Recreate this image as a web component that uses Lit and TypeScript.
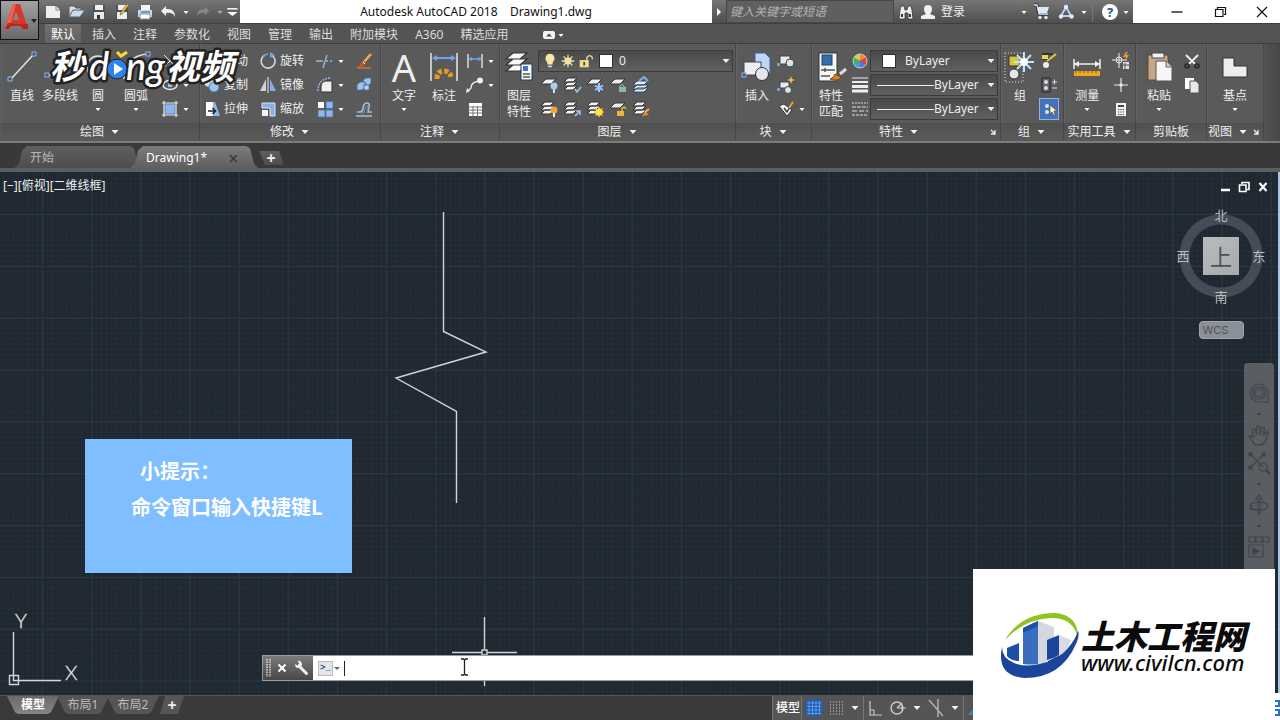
import { LitElement, html, svg, css, nothing, TemplateResult } from "lit";
import { customElement, property } from "lit/decorators.js";
import { classMap } from "lit/directives/class-map.js";

const sheetStack = svg`<path d="M5 3h9l-4 4H1z M5 7h9l-4 4H1z M5 11h9l-4 4H1z" fill="#f2f2f2" stroke="#333" stroke-width="1"/>`;
const oneSheet = svg`<path d="M6 4h10l-5 5H1z" fill="#f2f2f2" stroke="#333" stroke-width="1"/>`;

/* Small glyphs, drawn on a 20 x 20 grid */
const SMALL: Record<string, unknown> = {
  ellipse: svg`<ellipse cx="10" cy="10" rx="7" ry="4.5" fill="none" stroke="#e6e6e6" stroke-width="1.5"/><rect x="8" y="8" width="4" height="4" fill="#9cc3ee"/>`,
  rect: svg`<path d="M4 4l12 12M4 16L16 4" stroke="#e6e6e6"/>`,
  hatch: svg`<rect x="5" y="5" width="10" height="10" fill="#8fb6ea" stroke="#5a87c4"/><path d="M2 4h16M2 16h16M4 2v16M16 2v16" stroke="#e8e8e8" stroke-width="1.2"/>`,
  move: svg`<path d="M10 2v16M2 10h16" stroke="#e6e6e6" stroke-width="1.5"/>`,
  copy: svg`<circle cx="7" cy="7" r="5" fill="#ddd"/><circle cx="12" cy="12" r="5" fill="#9cc3ee" stroke="#4d78b3"/>`,
  stretch: svg`<path d="M4 3h7v14H4z" fill="#fff"/><path d="M11 3h2l5 14h-7z" fill="#8fb6ea"/><path d="M6 12h7M10.500 9l3 3-3 3" fill="none" stroke="#222" stroke-width="1.600"/>`,
  rotate: svg`<path d="M6 4.500A7 7 0 1 0 13.500 4" fill="none" stroke="#d5d9df" stroke-width="1.600"/><path d="M12 1l5 3-5 3z" fill="#7aa7e0"/><path d="M5 6a7 7 0 0 1 5-3" fill="none" stroke="#7aa7e0" stroke-width="1.500"/>`,
  mirror: svg`<path d="M8 4v12H2z" fill="#cfd3d8"/><path d="M12 4v12h6z" fill="#86b0e6"/><path d="M10 2v16" stroke="#f0f0f0"/>`,
  scale: svg`<path d="M4 4h13v13h-5V9H4z" fill="#86b0e6" stroke="#d9e6f7"/><rect x="4" y="11" width="6" height="6" fill="#f4f4f4"/>`,
  trim: svg`<path d="M1 10h7M11 10h2M15 10h2M12 4L8 17" stroke="#9db8d8" stroke-width="1.400" fill="none"/>`,
  fillet: svg`<path d="M6 17V11q1-5 5-5h6v11z" fill="#f0f0f0" stroke="#333"/><path d="M3 16Q3 4 15 3" fill="none" stroke="#8fb6ea" stroke-width="1.500" stroke-dasharray="2 1"/>`,
  array: svg`<rect x="3" y="3" width="6" height="6" fill="#fff"/><path d="M11 2.500h7v7h-7zM3 11h7v7H3zM11 11h7v7h-7z" fill="#8fb6ea" stroke="#4c6f9e" stroke-width=".8"/>`,
  erase: svg`<path d="M3 17h14" stroke="#e28a62"/><path d="M17 3l-8 9" stroke="#e7b34a" stroke-width="2.600"/><path d="M10 10l2 2-4 5-6-1q5-1 5-5z" fill="#c4581d"/><path d="M9 11l2 2" stroke="#fff"/>`,
  explode: svg`<path d="M3 10l3-3h5v5l-3 3H3zM9 5l3-2h5v5l-3 3" fill="#9cc3ee" stroke="#52749f"/><rect x="10" y="10" width="5" height="5" fill="#b9d3f3" stroke="#52749f"/>`,
  offset: svg`<path d="M2 17h16M3 13h3q2 0 3-3 0-6 4-6 3 0 2 4l-1 5h4" fill="none" stroke="#a8bfdc" stroke-width="1.600"/><path d="M7 14h3q1-7 3-7t0 7" fill="none" stroke="#6c93c5"/>`,
  linear: svg`<path d="M3 3v14M17 3v14" stroke="#eee" stroke-width="1.300"/><path d="M4 8h12" stroke="#6ea5ea" stroke-width="1.500"/><path d="M3 8l4-2v4zM17 8l-4-2v4z" fill="#6ea5ea"/>`,
  leader: svg`<path d="M3 16l3-3q0-6 8-7" fill="none" stroke="#eee" stroke-width="1.300"/><circle cx="15" cy="5.500" r="3" fill="#eee"/><path d="M1 18l1-5 3 3z" fill="#eee"/>`,
  table: svg`<rect x="4" y="4" width="13" height="13" fill="#fff"/><path d="M4 8h13M4 11h13M4 14h13M8 7v10M12.500 7v10" stroke="#777"/>`,
  layOff: svg`${oneSheet}<circle cx="14" cy="11" r="3.500" fill="#a9cdf5"/><path d="M14 14v4" stroke="#ddd" stroke-width="2"/>`,
  layIso: svg`${sheetStack}<path d="M12 14l2 3 4-5" fill="none" stroke="#9cc3ee" stroke-width="1.500"/>`,
  layFrz: svg`${oneSheet}<path d="M13 8v9M9 10.500l8 4.500M17 10.500L9 15" stroke="#9cc9ff" stroke-width="2"/>`,
  layLock: svg`${oneSheet}<path d="M11 12v-1q2-3 4 0v1" fill="none" stroke="#9fc7b9"/><rect x="10" y="12" width="7" height="5" fill="#8cb8a5"/>`,
  layCur: svg`<path d="M5 6h11l-4 4H1zM5 10h11l-4 4H1zM5 13h11l-4 4H1z" fill="#e9eef5" stroke="#30496b"/><path d="M7 6l5-4 4 4" fill="none" stroke="#86b0e6" stroke-width="2"/>`,
  layOn: svg`${sheetStack}<circle cx="14" cy="11" r="3.500" fill="#f0a43a"/><path d="M14 14v4" stroke="#eee" stroke-width="2"/>`,
  layUniso: svg`${sheetStack}<path d="M12 17l5-5M13 12h4v4" fill="none" stroke="#9cc3ee" stroke-width="1.500"/>`,
  layThaw: svg`${sheetStack}<path d="M13 8v10M8 13h10M9.500 9.500l7 7M16.500 9.500l-7 7" stroke="#f3b928" stroke-width="1.600"/><circle cx="13" cy="13" r="3.500" fill="#ffe14f"/>`,
  layUnlock: svg`${oneSheet}<path d="M13 12V9q3-2 4 1" fill="none" stroke="#eab53a" stroke-width="1.500"/><rect x="8" y="12" width="7" height="5" fill="#eab53a"/>`,
  layMatch: svg`${sheetStack}<path d="M10 17l3-5 4 4z" fill="#e08a35"/><path d="M13 13l4-3" stroke="#f0b26a" stroke-width="2"/>`,
  blkNew: svg`<rect x="4" y="5" width="10" height="8" fill="#e6eaf2" stroke="#444"/><circle cx="14" cy="12" r="4" fill="#dde2ea" stroke="#444"/><rect x="1" y="12" width="3" height="3" fill="#6fa1e2"/>`,
  blkEdit: svg`<rect x="4" y="7" width="9" height="6" fill="#e6eaf2" stroke="#444"/><circle cx="12" cy="15" r="3.500" fill="#dde2ea" stroke="#444"/><path d="M15 1l1 3 3 1-3 1-1 3-1-3-3-1 3-1z" fill="#f5c342"/><rect x="1" y="13" width="3" height="3" fill="#6fa1e2"/>`,
  blkAttr: svg`<path d="M3 7l5-2 8 6-5 6z" fill="#f3f3f3" stroke="#333"/><path d="M8 9l3 4 5-8" fill="none" stroke="#333" stroke-width="1.400"/><path d="M13 9l4-6" stroke="#e6a040" stroke-width="2"/>`,
  wheel: svg`<path d="M10 10V3a7 7 0 0 1 6 3.500z" fill="#f08a3c"/><path d="M10 10l6-3.500a7 7 0 0 1 0 7z" fill="#e8413c"/><path d="M10 10l6 3.500a7 7 0 0 1-6 3.500z" fill="#5d6fe0"/><path d="M10 10v7a7 7 0 0 1-6-3.500z" fill="#36a2e0"/><path d="M10 10l-6 3.500a7 7 0 0 1 0-7z" fill="#3fb667"/><path d="M10 10L4 6.500A7 7 0 0 1 10 3z" fill="#e5c94a"/><circle cx="10" cy="10" r="7" fill="none" stroke="#ddd" stroke-width=".8"/>`,
  weights: svg`<path d="M2 3h16" stroke="#eee"/><path d="M2 7h16" stroke="#eee" stroke-width="2"/><path d="M2 11.500h16" stroke="#eee" stroke-width="3"/><path d="M2 16h16" stroke="#eee" stroke-width="3"/>`,
  dashes: svg`<path d="M2 4h16" stroke="#ddd" stroke-dasharray="2 1"/><path d="M2 8h16" stroke="#ddd" stroke-dasharray="4 1"/><path d="M2 12h16" stroke="#ddd" stroke-dasharray="5 2"/><path d="M2 16h16" stroke="#ddd" stroke-dasharray="3 1"/>`,
  ungroup: svg`<path d="M3 3h11M3 8h7" stroke="#333" stroke-width="2"/><rect x="3" y="4" width="6" height="4" fill="#e7d75a"/><path d="M17 3L8 10" stroke="#e8c33f" stroke-width="2"/><circle cx="7" cy="14" r="3" fill="#eee"/>`,
  groupEdit: svg`<path d="M3 3h8v14H3z" fill="#666" stroke="#222"/><circle cx="7" cy="7" r="2" fill="#cfe0f5"/><circle cx="7" cy="13" r="2" fill="#cfe0f5"/><path d="M13 7h5M15.500 4.500v5M13 13h5" stroke="#ddd"/>`,
  groupSel: svg`<circle cx="8" cy="7" r="2" fill="#d7e6fa"/><circle cx="8" cy="13" r="2" fill="#d7e6fa"/><path d="M11 6v9l2-2 2 4 1-1-1-4h3z" fill="#fff3b0" stroke="#444" stroke-width=".6"/>`,
  quick: svg`<path d="M8 2v15M1 9h15" stroke="#eee"/><circle cx="8" cy="9" r="3" fill="none" stroke="#eee"/><path d="M15 1l-3 5h3l-1 4 4-6h-3l2-3z" fill="#f09a2e"/><rect x="12" y="11" width="6" height="7" fill="#ddd"/><path d="M12 14h6M14 12v6" stroke="#555"/>`,
  point: svg`<path d="M10 3v14M3 10h14" stroke="#e6e6e6" stroke-width="1.200"/><circle cx="10" cy="10" r="1.800" fill="#e6e6e6"/>`,
  calc: svg`<rect x="5" y="4" width="10" height="13" fill="#f4f4f4"/><path d="M7 7h6" stroke="#444" stroke-width="2"/><path d="M7 10.500h6M7 13h6M7 15.500h6" stroke="#555" stroke-dasharray="1.500 .8"/>`,
  cut: svg`<path d="M4 4l9 9M16 4l-9 9" stroke="#f0f0f0" stroke-width="1.800"/><circle cx="5" cy="15" r="2" fill="none" stroke="#222" stroke-width="1.500"/><circle cx="15" cy="15" r="2" fill="none" stroke="#222" stroke-width="1.500"/>`,
  copyDoc: svg`<path d="M3 3h9v11H3z" fill="#fff"/><path d="M8 6h6l3 3v9H8z" fill="#e9e9e9" stroke="#555"/>`,
  bulb: svg`<path d="M10 2a5 5 0 0 1 3 9v3H7v-3a5 5 0 0 1 3-9z" fill="#f7e7a0"/><path d="M8 15h4v2H8z" fill="#ddd"/>`,
  sun: svg`<path d="M10 3v14M3 10h14M5 5l10 10M15 5L5 15" stroke="#e6d9a5" stroke-width="1.400"/><circle cx="10" cy="10" r="4" fill="#f4e2a0"/>`,
  unlock: svg`<path d="M11 9V6q3-4 6 0v2" fill="none" stroke="#e9dca0" stroke-width="1.500"/><rect x="3" y="9" width="10" height="8" fill="#f1e089"/><path d="M8 11v4" stroke="#444" stroke-width="2"/>`,
  new: svg`<path d="M3 4h10l4 4v8H3z" fill="#eee"/><path d="M13 4v4h4" fill="none" stroke="#888"/>`,
  open: svg`<path d="M3 15V4h5l2 2h5v3" fill="#ddd" stroke="#555"/><path d="M3 15l4-7h12l-5 7z" fill="#c9dae8" stroke="#49637d"/>`,
  save: svg`<path d="M4 3h12v14H4z" fill="#4c5057"/><path d="M6 3h8v5H6z" fill="#f2f2f2"/><path d="M5 10h10v7H5z" fill="#e9e9e9"/><path d="M8 13h3v4H8z" fill="#333"/>`,
  saveAs: svg`<path d="M4 3h12v14H4z" fill="#4c5057"/><path d="M6 3h8v5H6zM5 10h10v7H5z" fill="#eee"/><path d="M17 3l-7 9-2 1 1-3 6-8z" fill="#f0bd45" stroke="#73531a" stroke-width=".6"/>`,
  print: svg`<path d="M6 3h9v6H6z" fill="#f4f4f4"/><path d="M3 8h14v7H3z" fill="#ccd8e5"/><path d="M5 12h10v5H5z" fill="#fff" stroke="#7b91a8"/><path d="M6 10h9" stroke="#5586b9" stroke-width="1.500"/>`,
  undo: svg`<path d="M3 9l5-5v3q9-1 9 8-2-5-9-4v3z" fill="#f0f0f0"/>`,
  redo: svg`<path d="M17 9l-5-5v3Q3 6 3 15q2-5 9-4v3z" fill="#858585"/>`,
  more: svg`<path d="M4 6h13" stroke="#fff" stroke-width="1.800"/><path d="M4 10h13l-6.500 5z" fill="#fff"/>`,
  binoc: svg`<path d="M3 17l1-9 1-4h3l1 4 2 0 1-4h3l1 4 1 9h-5v-6h-3v6z" fill="#eee" stroke="#333" stroke-width=".8"/><path d="M5 12h2v3H5zM13 12h2v3h-2z" fill="#333"/>`,
  user: svg`<path d="M10 3q4 0 4 4 0 3-2 5l5 2v3H3v-3l5-2q-2-2-2-5 0-4 4-4z" fill="#f0f0f0"/>`,
  cart: svg`<path d="M2 3h3l2 9h9" fill="none" stroke="#222" stroke-width="3"/><path d="M5 5h12l-2 6H7z" fill="#dce9f7"/><path d="M2 3h3l2 9h9" fill="none" stroke="#dce9f7" stroke-width="1.300"/><circle cx="8" cy="15.500" r="1.700" fill="#dce9f7"/><circle cx="14" cy="15.500" r="1.700" fill="#dce9f7"/>`,
  a360: svg`<path d="M10 5L5 14h10z" fill="none" stroke="#b9d2f0" stroke-width="2"/><circle cx="10" cy="5" r="2.200" fill="#dfe9f5"/><circle cx="5" cy="14.500" r="2.200" fill="#dfe9f5"/><circle cx="15.500" cy="14.500" r="2.200" fill="#dfe9f5"/>`,
  min: svg`<path d="M5 10h10" stroke="#111" stroke-width="1.200"/>`,
  restore: svg`<path d="M7.500 7V5.500h8v7H14M5.500 7.500h7.500v7H5.500z" fill="none" stroke="#111" stroke-width="1.200"/>`,
  close: svg`<path d="M5 5l10 10M15 5L5 15" stroke="#111" stroke-width="1.200"/>`,
  wheelNav: svg`<path d="M10 1a9 9 0 0 1 9 9v9h-9a9 9 0 0 1 0-18z"/><path d="M7 4h6l3 3v6l-3 3H7l-3-3V7z"/><circle cx="10" cy="10" r="4"/>`,
  pan: svg`<path d="M6 19q-3-5-5-8 2-1 4 1L4 5q2-2 3 1l1 4V2q2-1 3 1v7l2-7q2-1 2 1l-1 7 3-4q2 0 1 2-1 6-5 10z"/>`,
  zoom: svg`<path d="M1 1l13 13M15 1L1 15"/><path d="M0 0h3v3H0zM13 0h3v3h-3zM0 13h3v3H0z" fill="#3f454b"/><circle cx="14" cy="14" r="4"/><path d="M17 17l4 4" stroke-width="2.500"/>`,
  orbit: svg`<path d="M10 0l3 4h-2v15H9V4H7z"/><ellipse cx="10" cy="11" rx="9" ry="4"/><path d="M3 10l-2 4 5 1"/>`,
  motion: svg`<path d="M0 0h6v5H0zM7 0h6v5H7zM14 0h6v5h-6zM0 8h14v12H0z"/><path d="M4 11l6 3-6 4z" fill="#3b4147"/>`,
  gridOn: svg`<rect x="1" y="1" width="18" height="18" rx="5" fill="#145fc0" opacity=".6"/><path d="M5 3v14M8.500 3v14M12 3v14M15.500 3v14M3 5h14M3 8.500h14M3 12h14M3 15.500h14" stroke="#4a9cff"/>`,
  snap: svg`<path d="M4 4h13M4 7h13M4 10h13M4 13h13M4 16h13" stroke="#d2d2d2" stroke-dasharray="1 2"/>`,
  ortho: svg`<path d="M4 3v14h12M4 12h4v5" fill="none" stroke="#c9c9c9" stroke-width="1.200"/>`,
  polar: svg`<circle cx="9" cy="10" r="6" fill="none" stroke="#ccc" stroke-width="1.400"/><path d="M9 10h9M9 10l5-5M14 7v5" stroke="#ccc" stroke-width="1.200" fill="none"/>`,
  iso: svg`<path d="M3 2l14 16M12 1v18" stroke="#b5b5b5" stroke-width="1.400"/>`,
  angle: svg`<path d="M16 3L4 16h13M10 10q4 1 4 6" fill="none" stroke="#2d8cf0" stroke-width="1.600"/>`,
};

/* Large ribbon glyphs, drawn on a 32 x 32 grid */
const LARGE: Record<string, unknown> = {
  line: svg`<path d="M5 28L28 3" stroke="#e4e4e4" stroke-width="1.500"/><path d="M2 26h4v4H2zM26 1h4v4h-4z" fill="#40567a" stroke="#8fb6ea"/>`,
  pline: svg`<path d="M3 24h14L29 8" fill="none" stroke="#e4e4e4" stroke-width="1.500"/><rect x="1" y="22" width="4" height="4" fill="#40567a" stroke="#8fb6ea"/>`,
  circle: svg`<circle cx="16" cy="16" r="11" fill="none" stroke="#e4e4e4" stroke-width="1.500"/>`,
  arc: svg`<path d="M4 28Q6 4 28 3" fill="none" stroke="#e4e4e4" stroke-width="1.500"/><rect x="26" y="1" width="4" height="4" fill="#40567a" stroke="#8fb6ea"/>`,
  dim: svg`<path d="M3 2v28M29 2v28" stroke="#e8e8e8" stroke-width="1.500"/><path d="M5 7h22" stroke="#6ea5ea" stroke-width="2"/><path d="M4 7l5-3v6zM28 7l-5-3v6z" fill="#6ea5ea"/><path d="M9 28q0-8 7-8 7 0 7 8" fill="none" stroke="#e89a25" stroke-width="5" stroke-dasharray="4 2"/>`,
  layers: svg`<path d="M10 2h14l-7 6H3zM10 8h14l-7 6H3zM10 14h14l-7 6H3z" fill="#fafafa" stroke="#333" stroke-width="1.200"/><rect x="18" y="13" width="11" height="16" fill="#f6f9fd" stroke="#243a5e"/><rect x="20" y="15" width="5" height="5" fill="#3c78c2"/><path d="M20 23h7M20 26h7" stroke="#555" stroke-width="1.500"/>`,
  insert: svg`<path d="M14 2h10l5 5v15H14z" fill="#bcd7f7" stroke="#3d6394"/><rect x="3" y="11" width="17" height="13" fill="#eceff4" stroke="#444"/><circle cx="21" cy="23" r="6.500" fill="#e4e8ed" stroke="#333"/><rect x="1" y="22" width="4" height="4" fill="#40567a" stroke="#8fb6ea"/>`,
  match: svg`<path d="M4 2h18v28H4z" fill="#f4f6f9" stroke="#333"/><rect x="7" y="4" width="10" height="10" fill="#2f6fae" stroke="#1d436b"/><path d="M6 19h14M6 25h9M10 17v4" stroke="#555" stroke-width="1.500"/><path d="M31 18l-6 5" stroke="#ddd" stroke-width="3"/><path d="M15 28q4-1 5-5l6 3q-2 5-11 2z" fill="#d58328" stroke="#7c4510"/>`,
  group: svg`<path d="M1 2h18v29H1z" fill="none" stroke="#ddd" stroke-dasharray="1 2"/><rect x="5" y="5" width="11" height="10" fill="#d9c63a" stroke="#333"/><circle cx="10" cy="23" r="5" fill="#e3e6ea" stroke="#333"/><path d="M20 1v20M10 11h20M13 4l14 14M27 4L13 18" stroke="#bfe2ff" stroke-width="2"/><circle cx="20" cy="11" r="4" fill="#fff"/>`,
  measure: svg`<path d="M3 8v10M29 8v10M3 13h26" stroke="#f0f0f0" stroke-width="1.500"/><path d="M3 13l5-3v6zM29 13l-5-3v6z" fill="#f0f0f0"/><rect x="3" y="20" width="26" height="5" fill="#f0a61e"/><path d="M5 20v2M9 20v2M13 20v2M17 20v2M21 20v2M25 20v2" stroke="#8a5a08"/>`,
  paste: svg`<rect x="5" y="4" width="20" height="25" fill="#c6a888" stroke="#5b4632"/><path d="M9 2h12v5H9z" fill="#f2f2f2" stroke="#444"/><path d="M13 10h10l6 6v14H13z" fill="#f6f6f6" stroke="#555"/><path d="M23 10v6h6" fill="#d0d0d0" stroke="#666"/>`,
  base: svg`<path d="M4 7h11v8h13v11H4z" fill="#ededed" stroke="#333"/>`,
};

const icon = (name: string, size = 20) =>
  html`<svg class="ico" width=${size} height=${size} viewBox="0 0 20 20" aria-hidden="true">${SMALL[name]}</svg>`;
const caret = (dim = false) =>
  html`<svg class="caret" width="8" height="10" viewBox="0 0 8 10" aria-hidden="true"><path d="M1.500 4h5L4 7z" fill=${dim ? "#aaa" : "#fff"}/></svg>`;
const drop = html`<svg width="10" height="8" viewBox="0 0 10 8" aria-hidden="true"><path d="M1.500 2h7L5 6z" fill="#f2f2f2"/></svg>`;

const base = css`
  * { box-sizing: border-box; }
  button, input, select { font: inherit; color: inherit; border: 0; margin: 0; padding: 0; background: none; }
  button { display: flex; align-items: center; justify-content: center; white-space: nowrap; }
  svg { display: block; flex: none; }
`;

interface Big { icon: string; lines: string[]; menu?: boolean; glyph?: string; }
interface Small { icon: string; name: string; label?: string; menu?: boolean; on?: boolean; }

const bigTool = (b: Big) => html`
  <button class="big">
    ${b.glyph
      ? html`<span class="glyph" aria-hidden="true">${b.glyph}</span>`
      : html`<svg class="pic" width="32" height="32" viewBox="0 0 32 32" aria-hidden="true">${LARGE[b.icon]}</svg>`}
    ${b.lines.map((l) => html`<span>${l}</span>`)}
    ${b.menu ? caret() : nothing}
  </button>`;

const smallTool = (s: Small) => html`
  <button class=${classMap({ small: true, on: !!s.on })} aria-label=${s.name}>
    ${icon(s.icon)}${s.label ? html`<span>${s.label}</span>` : nothing}${s.menu ? caret() : nothing}
  </button>`;

@customElement("ribbon-panel")
class RibbonPanel extends LitElement {
  @property() heading = "";
  @property() fit = "";
  @property({ type: Boolean }) menu = false;
  @property({ type: Boolean }) launcher = false;
  static styles = [base, css`
    :host { display: flex; flex-direction: column; min-width: 0; border-right: 1px solid #474747; box-shadow: inset 1px 0 #636363; }
    .body { display: flex; height: 79px; padding: 5px 2px 0; }
    .snug { padding: 5px 2px 0 0; }
    .roomy { padding-left: 4px; gap: 2px; }
    .spread { justify-content: space-around; }
    footer { display: flex; align-items: center; height: 18px; background: linear-gradient(#505050, #5a5a5a); }
    .title { flex: 1; gap: 6px; line-height: 18px; }
    .launch { width: 14px; height: 16px; }
  `];
  render() {
    return html`
      <div class="body ${this.fit}"><slot></slot></div>
      <footer>
        <button class="title">${this.heading}${this.menu ? drop : nothing}</button>
        ${this.launcher
          ? html`<button class="launch" aria-label="更多"><svg width="8" height="8" viewBox="0 0 8 8"><path d="M2 2l4 4M6 2v4H2" fill="none" stroke="#eee" stroke-width="1.300"/></svg></button>`
          : nothing}
      </footer>`;
  }
}

@customElement("cad-ribbon")
class CadRibbon extends LitElement {
  static styles = [base, css`
    :host {
      display: grid; padding: 0 16px 0 1px;
      grid-template-columns: 199fr 181fr 119fr 236fr 76fr 189fr 63fr 72fr 71fr 57fr;
      background: linear-gradient(90deg, #5a5a5a 98%, #474747);
      border-top: 1px solid #3c3c3c; border-bottom: 2px solid #7b7b7b;
    }
    ribbon-panel { background: #5a5a5a; }
    .big { flex-direction: column; justify-content: flex-start; width: 38px; flex: none; line-height: 16px; }
    .pic, .glyph { height: 32px; margin: 2px 0 5px; }
    .glyph { font: 38px/32px "Noto Sans", sans-serif; color: #eee; }
    .tools { display: grid; grid-template-rows: repeat(3, 24px); grid-auto-flow: column; align-content: start; align-items: center; justify-content: start; }
    .row { display: flex; gap: 3px; padding-left: 2px; }
    .small { justify-content: flex-start; gap: 2px; height: 22px; min-width: 20px; }
    .on { background: #4471b8; box-shadow: inset 0 0 0 1px #8db3e8; }
    .edit { grid-template-columns: 56px 57px 39px 20px; }
    .draw { padding-left: 5px; }
    .fields { display: grid; grid-template-rows: repeat(3, 24px); align-items: center; flex: 1; min-width: 0; align-content: start; }
    .combo { display: flex; align-items: center; height: 22px; padding: 0 1px 0 2px; background: linear-gradient(#494949, #606060); border: 1px solid #3b3b3b; min-width: 0; }
    .combo select { appearance: none; flex: 1; min-width: 0; height: 20px; }
    .swatch { width: 14px; height: 14px; margin: 0 6px 0 4px; background: #fff; border: 1px solid #2e2e2e; flex: none; }
    .combo.color .swatch { margin: 0 9px; }
    .rule { flex: 1; height: 1px; margin-left: 4px; background: #eee; }
    .combo.lined select { flex: none; width: 45px; }
    .combo.lined svg { margin-left: 7px; }
  `];
  render(): TemplateResult {
    return html`
      <ribbon-panel heading="绘图" menu>
        ${[
          { icon: "line", lines: ["直线"] }, { icon: "pline", lines: ["多段线"] },
          { icon: "circle", lines: ["圆"], menu: true }, { icon: "arc", lines: ["圆弧"], menu: true },
        ].map(bigTool)}
        <div class="tools draw">
          ${[{ icon: "rect", name: "矩形", menu: true }, { icon: "ellipse", name: "椭圆", menu: true }, { icon: "hatch", name: "图案填充", menu: true }].map(smallTool)}
        </div>
      </ribbon-panel>
      <ribbon-panel heading="修改" menu>
        <div class="tools edit">
          ${[
            { icon: "move", name: "移动", label: "移动" }, { icon: "copy", name: "复制", label: "复制" }, { icon: "stretch", name: "拉伸", label: "拉伸" },
            { icon: "rotate", name: "旋转", label: "旋转" }, { icon: "mirror", name: "镜像", label: "镜像" }, { icon: "scale", name: "缩放", label: "缩放" },
            { icon: "trim", name: "修剪", menu: true }, { icon: "fillet", name: "圆角", menu: true }, { icon: "array", name: "阵列", menu: true },
            { icon: "erase", name: "删除" }, { icon: "explode", name: "分解" }, { icon: "offset", name: "偏移" },
          ].map(smallTool)}
        </div>
      </ribbon-panel>
      <ribbon-panel heading="注释" fit="roomy" menu>
        ${[{ icon: "", glyph: "A", lines: ["文字"], menu: true }, { icon: "dim", lines: ["标注"] }].map(bigTool)}
        <div class="tools">
          ${[{ icon: "linear", name: "线性", menu: true }, { icon: "leader", name: "引线", menu: true }, { icon: "table", name: "表格" }].map(smallTool)}
        </div>
      </ribbon-panel>
      <ribbon-panel heading="图层" fit="snug" menu>
        ${bigTool({ icon: "layers", lines: ["图层", "特性"] })}
        <div class="fields">
          <div class="combo">
            ${icon("bulb", 18)}${icon("sun", 18)}${icon("unlock", 18)}<i class="swatch"></i>
            <select aria-label="图层"><option>0</option></select>${drop}
          </div>
          <div class="row">${["layOff", "layIso", "layFrz", "layLock", "layCur"].map((i) => smallTool({ icon: i, name: "图层工具" }))}</div>
          <div class="row">${["layOn", "layUniso", "layThaw", "layUnlock", "layMatch"].map((i) => smallTool({ icon: i, name: "图层工具" }))}</div>
        </div>
      </ribbon-panel>
      <ribbon-panel heading="块" menu>
        ${bigTool({ icon: "insert", lines: ["插入"] })}
        <div class="tools">
          ${[{ icon: "blkNew", name: "创建" }, { icon: "blkEdit", name: "编辑" }, { icon: "blkAttr", name: "编辑属性", menu: true }].map(smallTool)}
        </div>
      </ribbon-panel>
      <ribbon-panel heading="特性" fit="snug" menu launcher>
        ${bigTool({ icon: "match", lines: ["特性", "匹配"] })}
        <div class="tools">
          ${[{ icon: "wheel", name: "颜色" }, { icon: "weights", name: "线宽" }, { icon: "dashes", name: "线型" }].map(smallTool)}
        </div>
        <div class="fields">
          <div class="combo color"><i class="swatch"></i><select aria-label="对象颜色"><option>ByLayer</option></select>${drop}</div>
          <div class="combo lined"><i class="rule"></i><select aria-label="线宽"><option>ByLayer</option></select>${drop}</div>
          <div class="combo lined"><i class="rule"></i><select aria-label="线型"><option>ByLayer</option></select>${drop}</div>
        </div>
      </ribbon-panel>
      <ribbon-panel heading="组" fit="snug" menu>
        ${bigTool({ icon: "group", lines: ["组"] })}
        <div class="tools">
          ${[{ icon: "ungroup", name: "解除编组" }, { icon: "groupEdit", name: "组编辑" }, { icon: "groupSel", name: "组选择", on: true }].map(smallTool)}
        </div>
      </ribbon-panel>
      <ribbon-panel heading="实用工具" fit="spread" menu>
        ${bigTool({ icon: "measure", lines: ["测量"], menu: true })}
        <div class="tools">
          ${[{ icon: "quick", name: "快速选择" }, { icon: "point", name: "点坐标" }, { icon: "calc", name: "快速计算器" }].map(smallTool)}
        </div>
      </ribbon-panel>
      <ribbon-panel heading="剪贴板" fit="spread">
        ${bigTool({ icon: "paste", lines: ["粘贴"], menu: true })}
        <div class="tools">${[{ icon: "cut", name: "剪切" }, { icon: "copyDoc", name: "复制" }].map(smallTool)}</div>
      </ribbon-panel>
      <ribbon-panel heading="视图" fit="spread" menu launcher>
        ${bigTool({ icon: "base", lines: ["基点"], menu: true })}
      </ribbon-panel>`;
  }
}

@customElement("title-bar")
class TitleBar extends LitElement {
  static styles = [base, css`
    :host { display: grid; grid-template: 24px 19px / 39px minmax(0, 1fr); background: #545454; color: #eee; }
    .app { grid-row: 1 / 3; height: 40px; background: linear-gradient(#a2a2a2, #686868); border: 1px solid #111; align-items: flex-start; padding-top: 1px; }
    .top { display: flex; background: #fff; border-bottom: 1px solid #3f3f3f; }
    .bar { display: flex; align-items: center; background: linear-gradient(#767676, #4e4e4e); }
    .quick { width: 201px; padding-left: 4px; gap: 3px; }
    .quick .caret { margin: 0 1px; }
    .quick .more { margin-left: -4px; }
    h1 { flex: 1; margin: 0; font: 12px/24px "Noto Sans", sans-serif; color: #111; text-align: center; white-space: pre; overflow: hidden; }
    .info { width: 421px; }
    .go { width: 14px; height: 23px; }
    input { width: 168px; height: 23px; padding: 0 3px; background: #5f5f5f; border: 1px solid #474747; font-style: italic; }
    input::placeholder { color: #b5b5b5; }
    .find { margin: 0 2px; }
    .sign { gap: 3px; }
    .end { display: flex; align-items: center; margin-left: auto; gap: 4px; padding-right: 3px; }
    .end i { width: 1px; height: 18px; margin-right: 5px; background: #777; }
    .help { width: 16px; height: 16px; border-radius: 50%; background: #fff; color: #1c4e96; font: bold 13px/16px "Open Sans", sans-serif; }
    .win { display: flex; width: 147px; justify-content: space-between; padding: 0 8px 0 33px; }
    nav { display: flex; gap: 5px; padding-left: 6px; height: 19px; color: #dcdcdc; }
    nav button { padding: 2px 6px 0; height: 19px; }
    nav .on { background: linear-gradient(#707070, #626262); color: #fff; }
    nav .toggle { margin-left: 18px; gap: 2px; }
  `];
  render() {
    const tabs = ["默认", "插入", "注释", "参数化", "视图", "管理", "输出", "附加模块", "A360", "精选应用"];
    return html`
      <button class="app" aria-label="应用程序菜单">
        <svg width="36" height="32" viewBox="0 0 36 32">
          <path d="M3 27L11 2h7l8 25h-6l-2-6H9l-1 6z" fill="#d8362a"/><path d="M11 2h3l-5 19-1 6H3z" fill="#f0604f"/>
          <path d="M3 27l3-6 20 1v5h-5l-2-3H9l-2 3z" fill="#b8261e"/><path d="M14 9l3 9h-6z" fill="#858585"/><path d="M29 17h6l-3 4z" fill="#222"/>
        </svg>
      </button>
      <div class="top">
        <div class="bar quick">
          ${["new", "open", "save", "saveAs", "print", "undo"].map((i) => html`<button aria-label=${i}>${icon(i)}</button>`)}
          <button aria-label="undo list">${caret()}</button><button aria-label="redo">${icon("redo", 18)}</button>
          <button aria-label="redo list">${caret(true)}</button><button class="more" aria-label="customize">${icon("more", 16)}</button>
        </div>
        <h1>Autodesk AutoCAD 2018    Drawing1.dwg</h1>
        <div class="bar info">
          <button class="go" aria-label="展开"><svg width="6" height="8" viewBox="0 0 6 8"><path d="M1 0l4 4-4 4z" fill="#fff"/></svg></button>
          <input type="search" aria-label="搜索" placeholder="键入关键字或短语">
          <button class="find" aria-label="查找">${icon("binoc")}</button>
          <button class="sign">${icon("user")}登录</button>
          <div class="end">
            ${caret()}<button aria-label="商店">${icon("cart")}</button><button aria-label="A360">${icon("a360")}</button>${caret()}<i></i>
            <button class="help" aria-label="帮助">?</button>${caret()}
          </div>
        </div>
        <div class="win">
          <button aria-label="最小化">${icon("min", 22)}</button><button aria-label="还原">${icon("restore", 20)}</button><button aria-label="关闭">${icon("close", 20)}</button>
        </div>
      </div>
      <nav>
        ${tabs.map((t, i) => html`<button class=${classMap({ on: i === 0 })}>${t}</button>`)}
        <button class="toggle" aria-label="最小化功能区">
          <svg width="12" height="8" viewBox="0 0 12 8"><rect width="12" height="8" rx="2" fill="#f2f2f2"/><path d="M3 5.500L6 2.500l3 3z" fill="#444"/></svg>${caret()}
        </button>
      </nav>`;
  }
}

@customElement("drawing-area")
class DrawingArea extends LitElement {
  static styles = [base, css`
    :host { display: block; position: relative; overflow: hidden; background: #1f2830; border-right: 2px solid #a9c4e4; color: #eee; }
    .sheet { position: absolute; inset: 0; width: 100%; height: 100%; }
    .ucs { font: 300 20px Lato, sans-serif; fill: #e4e7ea; stroke: #e4e7ea; stroke-width: .3px; }
    .view { position: absolute; left: 3px; top: 6px; line-height: 16px; display: flex; }
    .mdi { position: absolute; right: 8px; top: 8px; display: flex; gap: 5px; }
    .cube { position: absolute; right: 12px; top: 35px; display: grid; justify-items: center; gap: 16px; width: 93px; }
    .compass { display: grid; grid-template: 16px 66px 16px / 20px 56px 20px; place-items: center; font-size: 13px; line-height: 16px; color: #b9bec4; background: radial-gradient(circle at 50% 50%, transparent 31px, #454b57 32px, #454b57 41px, transparent 42px); }
    .compass .face { grid-area: 2 / 2; width: 36px; height: 38px; background: linear-gradient(135deg, #b9bcbc, #a6aaab); color: #4c5157; font-size: 22px; line-height: 36px; }
    .n { grid-area: 1 / 2; } .w { grid-area: 2 / 1; } .e { grid-area: 2 / 3; } .s { grid-area: 3 / 2; }
    .wcs { width: 45px; height: 18px; border: 1px solid #a1a6ae; border-radius: 4px; background: #8a8f98; color: #4f555d; font: 11px/16px Inter, sans-serif; justify-content: flex-start; padding-left: 3px; }
    .navbar { position: absolute; right: 4px; top: 191px; width: 30px; height: 214px; padding-top: 18px; border-radius: 4px 4px 0 0; background: #5a5e62; display: flex; flex-direction: column; align-items: center; gap: 4px; }
    .navbar .ico { fill: none; stroke: #3f454b; stroke-width: 1.2; overflow: visible; }
    .navbar button { height: 24px; }
    .navbar i { width: 4px; height: 2px; background: #3f454b; margin: 4px 0; }
    .tip { position: absolute; left: 85px; top: 267px; width: 267px; height: 134px; padding: 14px 0 0 46px; background: #7fbeff; color: #fff; font: bold 20px/36px "Noto Sans CJK SC", sans-serif; }
    .tip p { margin: 0; white-space: nowrap; }
    .tip .lead { padding-left: 9px; }
    .cmd { position: absolute; left: 262px; right: 30px; bottom: 14px; height: 26px; display: flex; align-items: center; background: #fff; color: #333; border: 1px solid #9a9a9a; }
    .grip { display: flex; align-items: center; align-self: stretch; width: 50px; gap: 6px; padding-left: 3px; background: linear-gradient(#7b7b7b, #474747); }
    .prompt { width: 15px; height: 15px; margin-left: 5px; border: 1px solid #b4bcc6; background: #e3e7ec; font: bold 9px/13px "Liberation Mono", monospace; color: #31507a; }
    .cmd .bar { width: 1px; height: 15px; background: #222; margin: 0 2px 0 3px; }
    .cmd input { flex: 1; min-width: 0; outline: 0; }
    .beam { position: absolute; left: 460px; bottom: 19px; }
  `];
  render() {
    return html`
      <svg class="sheet" aria-hidden="true">
        <defs>
          <pattern id="fine" width="4.914" height="5.185" patternUnits="userSpaceOnUse" x="42" y="42"><path d="M0 .5h5M.5 0v6" stroke="#26303a" stroke-width=".6"/></pattern>
          <pattern id="major" width="49.140" height="51.850" patternUnits="userSpaceOnUse" x="42" y="42"><path d="M0 .5h50M.5 0v52" stroke="#2d3742" stroke-width="1.200"/></pattern>
        </defs>
        <rect width="100%" height="100%" fill="url(#fine)"/><rect width="100%" height="100%" fill="url(#major)"/>
        <g fill="none" stroke="#d0d5da" stroke-width="1.400" transform="translate(0 -172)">
          <path d="M443.500 212V331.500L486 352 396 378 456.500 411.500V503"/>
          <path d="M484.500 617v32M484.500 655v31M452 652.500h30M487 652.500h30M482 650h5v5h-5z"/>
          <path d="M13.500 632v43M19 680.500h42M9.500 675.500h9v9h-9zM13.500 676v4.500h5"/>
        </g>
        <text class="ucs" x="15" y="456">Y</text><text class="ucs" x="65" y="508">X</text>
      </svg>
      <div class="view"><button>[−]</button><button>[俯视]</button><button>[二维线框]</button></div>
      <div class="mdi">
        <button aria-label="最小化"><svg width="14" height="14" viewBox="0 0 14 14"><path d="M3 10h9" stroke="#fff" stroke-width="2.500"/></svg></button>
        <button aria-label="还原"><svg width="14" height="14" viewBox="0 0 14 14"><path d="M5 4V2.500h7v7h-2M2.500 5h6.500v6.500H2.500z" fill="none" stroke="#fff" stroke-width="1.600"/></svg></button>
        <button aria-label="关闭"><svg width="14" height="14" viewBox="0 0 14 14"><path d="M3.500 3l7 8M10.500 3l-7 8" stroke="#fff" stroke-width="2.200"/></svg></button>
      </div>
      <div class="cube">
        <div class="compass">
          <span class="n">北</span><span class="w">西</span><button class="face">上</button><span class="e">东</span><span class="s">南</span>
        </div>
        <button class="wcs">WCS</button>
      </div>
      <div class="navbar">
        <button aria-label="全导航控制盘">${icon("wheelNav", 20)}</button><i></i>
        <button aria-label="平移">${icon("pan", 22)}</button><button aria-label="缩放">${icon("zoom", 20)}</button><i></i>
        <button aria-label="动态观察">${icon("orbit", 20)}</button><i></i>
        <button aria-label="ShowMotion">${icon("motion", 20)}</button>
      </div>
      <div class="tip"><p class="lead">小提示：</p><p>命令窗口输入快捷键L</p></div>
      <div class="cmd">
        <div class="grip">
          <svg width="5" height="18" viewBox="0 0 5 18"><path d="M1 0v18M4 0v18" stroke="#ddd" stroke-width="1.500" stroke-dasharray="1.500 1"/></svg>
          <button aria-label="关闭"><svg width="10" height="10" viewBox="0 0 10 10"><path d="M1.500 1.500l7 7M8.500 1.500l-7 7" stroke="#fff" stroke-width="2"/></svg></button>
          <button aria-label="自定义"><svg width="16" height="16" viewBox="0 0 16 16"><path d="M6.500 6.500l7 7" stroke="#eee" stroke-width="3" stroke-linecap="round"/><path d="M2 4l2.500 1.500L6 3 4.500 1Q8 0 9 4q0 4-4 4-3 0-3-4z" fill="#eee"/></svg></button>
        </div>
        <button class="prompt" aria-label="最近使用的命令">&gt;_</button>
        <svg width="8" height="8" viewBox="0 0 8 8"><path d="M1 3h6L4 6z" fill="#666"/></svg>
        <i class="bar"></i><input aria-label="命令" type="text">
      </div>
      <svg class="beam" width="9" height="18" viewBox="0 0 9 18" aria-hidden="true"><path d="M1 1h2.500l1 1 1-1H8M4.500 2v14M1 17h2.500l1-1 1 1H8" fill="none" stroke="#222" stroke-width="1.300"/></svg>`;
  }
}

@customElement("app-root")
class AppRoot extends LitElement {
  static styles = [base, css`
    :host { display: flex; flex-direction: column; height: 100vh; position: relative; overflow: hidden; background: #3a3a3a; color: #eee; font: 12px/16px "Noto Sans", "Noto Sans CJK SC", sans-serif; }
    .files { display: flex; align-items: flex-end; height: 29px; padding-left: 14px; background: #393939; border-bottom: 4px solid #5c5f5f; flex: none; }
    .file { height: 22px; justify-content: flex-start; width: 128px; padding: 2px 20px 0 16px; background: linear-gradient(#5f5f5f, #4d4d4d); color: #b9b9b9; clip-path: polygon(0 100%, 5px 80%, 8px 20%, 13px 0, 116px 0, 120px 10%, 124px 80%, 100% 100%); }
    .file.on { justify-content: space-between; margin-left: -12px; width: 128px; background: linear-gradient(#7c7c7c, #5f5f5f); color: #fff; }
    .file.add { width: 24px; height: 14px; margin: 0 0 3px 1px; padding: 0; justify-content: center; color: #eee; font: bold 16px/14px "Noto Sans", sans-serif; clip-path: polygon(0 0, 20px 0, 100% 80%, 100% 100%, 6px 100%); }
    drawing-area { flex: 1; min-height: 0; }
    .status { display: flex; height: 25px; flex: none; background: #3a3a3a; border-top: 1px solid #55585a; }
    .sheets { display: flex; height: 18px; padding-left: 7px; }
    .sheetTab { width: 52px; margin-right: -2px; color: #bbb; background: #555; clip-path: polygon(0 0, 100% 0, 44px 90%, 41px 100%, 11px 100%, 8px 90%); }
    .sheetTab.on { background: linear-gradient(#6a6a6a, #858585); color: #fff; font-weight: bold; }
    .sheetTab.add { width: 24px; margin-left: 3px; color: #eee; font: bold 16px/16px "Noto Sans", sans-serif; clip-path: polygon(5px 0, 100% 0, 18px 100%, 0 100%); }
    .modes { display: flex; align-items: center; gap: 1px; margin-left: auto; flex: 0 0 508px; background: #555; border-left: 1px solid #777; padding-left: 3px; }
    .modes button { min-width: 21px; }
    .modes i { width: 1px; align-self: stretch; background: #777; }
    .modes .tag { color: #fff; font-weight: 500; }
    .modes .drop { min-width: 15px; }
    .video { position: absolute; left: 44px; top: 42px; }
    .video text { fill: #fff; stroke: #222; stroke-width: 5px; paint-order: stroke; stroke-linejoin: round; font: italic bold 34px "Noto Sans CJK SC", sans-serif; }
    .video .latin { font: italic 500 38px Lato, sans-serif; }
    .brand { position: absolute; right: 5px; bottom: 0; width: 302px; height: 151px; background: #fff; color: #0b0b0b; display: flex; align-items: center; padding: 2px 0 0 26px; }
    .brand strong { display: block; font: italic 900 33px/32px "Noto Sans CJK SC", sans-serif; }
    .brand a { display: block; color: inherit; text-decoration: none; font: italic 500 22px/22px "Noto Sans", sans-serif; }
    .corner { position: absolute; right: 0; bottom: 0; background: #fff; }
  `];
  render() {
    return html`
      <title-bar></title-bar>
      <cad-ribbon></cad-ribbon>
      <div class="files">
        <button class="file">开始</button>
        <button class="file on">Drawing1*<svg width="9" height="9" viewBox="0 0 9 9"><path d="M1 1l7 7M8 1L1 8" stroke="#3a3a3a" stroke-width="1.500"/></svg></button>
        <button class="file add" aria-label="新图形">+</button>
      </div>
      <drawing-area></drawing-area>
      <div class="status">
        <div class="sheets">
          <button class="sheetTab on">模型</button><button class="sheetTab">布局1</button><button class="sheetTab">布局2</button>
          <button class="sheetTab add" aria-label="新布局">+</button>
        </div>
        <div class="modes">
          <button class="tag">模型</button><i></i>
          <button aria-label="栅格">${icon("gridOn")}</button><button aria-label="捕捉">${icon("snap")}</button><button class="drop" aria-label="捕捉设置">${drop}</button><i></i>
          <button aria-label="正交">${icon("ortho")}</button><button aria-label="极轴">${icon("polar")}</button><button class="drop" aria-label="极轴设置">${drop}</button>
          <button aria-label="等轴测">${icon("iso")}</button><button class="drop" aria-label="等轴测设置">${drop}</button><i></i>
          <button aria-label="对象捕捉追踪">${icon("angle")}</button>
        </div>
      </div>
      <svg class="video" width="200" height="56" viewBox="0 0 200 56">
        <text x="6" y="37">秒</text><text class="latin" x="45" y="38">d</text><text class="latin" x="82" y="38">ng</text><text x="122" y="37">视频</text>
        <circle cx="73" cy="27" r="10" fill="#2b83f2" stroke="#222" stroke-width="1"/><path d="M70 21l9 6-9 6z" fill="#fff"/>
        <path d="M73 10l4 4 6-4" fill="none" stroke="#ffd93b" stroke-width="3"/>
      </svg>
      <svg class="corner" width="5" height="27" viewBox="0 0 5 27" aria-hidden="true"><path d="M0 8h4v5H0M0 17h4v5H0" fill="none" stroke="#2b6fd0" stroke-width="2"/></svg>
      <aside class="brand">
        <svg width="82" height="68" viewBox="0 0 82 68" aria-hidden="true">
          <path d="M6 28Q22 1 56 1q24 2 23 26-4-22-28-21Q24 8 6 28z" fill="#8fc31f"/>
          <path d="M3 35Q-3 64 26 66q36 0 51-34 4-9 2-13-6 18-24 27-22 12-40 5Q3 46 3 35z" fill="#1b459c"/>
          <path d="M8 36l12-5v18q-8 0-12-5z" fill="#1f4ea8"/><path d="M24 16l15-7v43q-8 1-15 0z" fill="#3a6dbd"/>
          <path d="M24 16l15-7v5l-15 7z" fill="#1f4ea8"/><path d="M39 9l16 6v12l-6 2v21l-10 2z" fill="#d4d7dc"/>
          <path d="M48 28l12-5v20q-6 4-12 5z" fill="#1b459c"/><path d="M60 23l12 5-3 8q-4 5-9 8z" fill="#d9dbe0"/>
        </svg>
        <div><strong>土木工程网</strong><a href="#">www.civilcn.com</a></div>
      </aside>`;
  }
}
